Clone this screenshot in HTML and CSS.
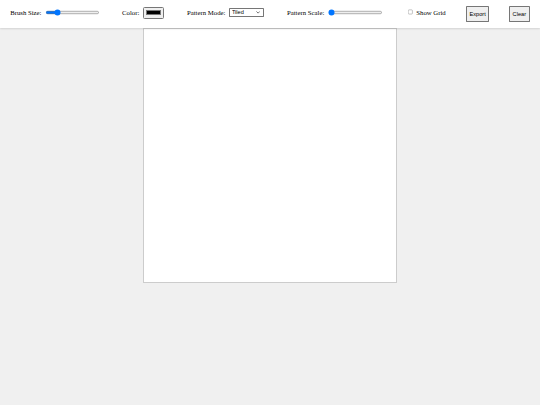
FILE: index.html
```html
<!DOCTYPE html>
<html>
<head>
<meta charset="utf-8">
<title>Pattern Brush</title>
<link rel="stylesheet" href="styles.css">
</head>
<body>
<div class="toolbar">
  <div class="group g-brush">
    <label for="brush">Brush Size:</label>
    <input type="range" id="brush" min="1" max="50" value="10">
  </div>
  <div class="group g-color">
    <label for="color">Color:</label>
    <input type="color" id="color" value="#000000">
  </div>
  <div class="group g-mode">
    <label for="mode">Pattern Mode:</label>
    <span class="select-wrap">
      <select id="mode" class="mode-select">
        <option>Tiled</option>
        <option>Mirrored</option>
        <option>Radial</option>
      </select>
      <svg class="select-arrow" width="10" height="6" viewBox="0 0 10 6"><path d="M1 1 L5 5 L9 1" fill="none" stroke="#333" stroke-width="1.6"/></svg>
    </span>
  </div>
  <div class="group g-scale">
    <label for="scale">Pattern Scale:</label>
    <input type="range" id="scale" min="1" max="10" value="1">
  </div>
  <label class="group g-grid"><input type="checkbox" id="grid"> Show Grid</label>
  <button class="btn btn-export">Export</button>
  <button class="btn btn-clear">Clear</button>
</div>
<div class="stage">
  <canvas class="canvas" width="599" height="599"></canvas>
</div>
</body>
</html>
```
FILE: styles.css
```css
html {
  zoom: 0.421875;
  overflow: hidden;
}
body {
  margin: 0;
  width: 1280px;
  height: 958px;
  overflow: hidden;
  background: #f0f0f0;
  font-family: "Liberation Serif", "Times New Roman", serif;
  font-size: 16px;
  color: #000;
}
.toolbar {
  display: flex;
  align-items: center;
  height: 66px;
  padding: 0 24px;
  background: #fff;
  box-shadow: 0 2px 4px rgba(0, 0, 0, 0.12);
  position: relative;
  z-index: 1;
}
.toolbar > * {
  flex-shrink: 0;
  white-space: nowrap;
}
.group {
  display: flex;
  align-items: center;
  gap: 7px;
  margin-bottom: 5px;
}
.g-color { margin-left: 51px; gap: 9px; }
.g-mode { margin-left: 54px; gap: 9px; margin-bottom: 7px; }
.g-scale { margin-left: 54px; }
.g-grid { margin-left: 54px; gap: 4px; margin-bottom: 8px; }
.select-wrap {
  position: relative;
  display: inline-flex;
}
.mode-select {
  appearance: none;
  -webkit-appearance: none;
  width: 83px;
  height: 20px;
  padding: 0 4px;
  font-family: "Liberation Sans", Arial, sans-serif;
  font-size: 13.33px;
  color: #000;
  background: #fff;
  border: 1px solid #767676;
  border-radius: 2px;
}
.select-arrow {
  position: absolute;
  right: 9px;
  top: 7px;
  pointer-events: none;
}
.btn {
  font-family: "Liberation Sans", Arial, sans-serif;
  font-size: 13.33px;
  padding: 10px 6px;
  background: #efefef;
  border: 1px solid #767676;
  border-radius: 2px;
}
.btn-export { margin-left: 48px; }
.btn-clear { margin-left: 47px; }
.stage {
  display: flex;
  justify-content: center;
}
.canvas {
  display: block;
  background: #fff;
  border: 1px solid #ccc;
}
```
